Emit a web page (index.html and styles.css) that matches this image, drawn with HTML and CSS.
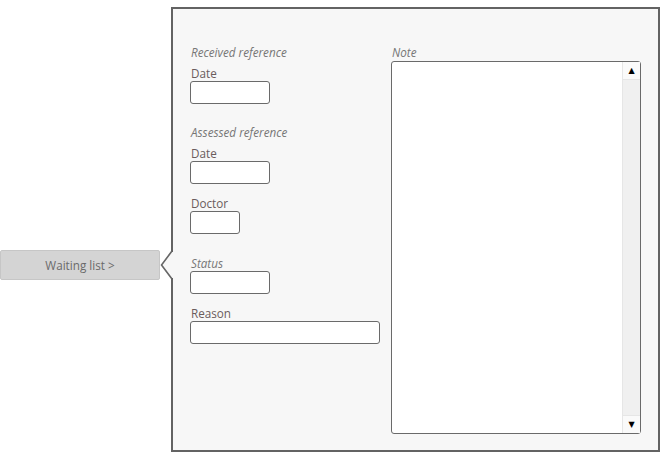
FILE: index.html
```html
<!DOCTYPE html>
<html>
<head>
<meta charset="utf-8">
<link rel="stylesheet" href="styles.css">
</head>
<body>
<div class="page">
  <div class="side">
    <button class="wl-btn">Waiting list &gt;</button>
  </div>
  <div class="panel">
    <svg class="notch" width="14" height="26" viewBox="0 0 14 26">
      <polygon points="10,0 14,0 14,26 10,26 1.5,13" fill="#f7f7f7"/>
      <polyline points="12,-1 1.5,13 12,27" fill="none" stroke="#666" stroke-width="1.6"/>
    </svg>
    <div class="grid">
      <div class="left">
        <div class="group">
          <div class="title">Received reference</div>
          <div class="label">Date</div>
          <div class="input w80"></div>
        </div>
        <div class="group g2">
          <div class="title">Assessed reference</div>
          <div class="label">Date</div>
          <div class="input w80"></div>
        </div>
        <div class="field">
          <div class="label">Doctor</div>
          <div class="input w50"></div>
        </div>
        <div class="field f-status">
          <div class="title">Status</div>
          <div class="input w80"></div>
        </div>
        <div class="field">
          <div class="label">Reason</div>
          <div class="input wfull"></div>
        </div>
      </div>
      <div class="right">
        <div class="title">Note</div>
        <div class="note">
          <div class="note-body"></div>
          <div class="scroll">
            <div class="arrow up">&#9650;</div>
            <div class="track"></div>
            <div class="arrow down">&#9660;</div>
          </div>
        </div>
      </div>
    </div>
  </div>
</div>
</body>
</html>
```
FILE: styles.css
```css
html, body {
  margin: 0;
  padding: 0;
  background: #ffffff;
}
body {
  font-family: "Open Sans", "Noto Sans", sans-serif;
  font-size: 11.7px;
}
.page {
  display: flex;
  align-items: flex-start;
  padding-top: 7px;
}
.side {
  width: 160px;
  padding-top: 243px;
}
.wl-btn {
  display: block;
  width: 160px;
  height: 30px;
  margin: 0;
  padding: 0;
  background: #d4d4d4;
  border: 1px solid #c6c6c6;
  border-radius: 2px;
  color: #6a6a6a;
  font-family: "Open Sans", "Noto Sans", sans-serif;
  font-size: 11.7px;
}
.panel {
  position: relative;
  margin-left: 11px;
  width: 485px;
  height: 441px;
  background: #f7f7f7;
  border: 2px solid #636363;
  box-shadow: 0 1px 0 #d0d0d0;
}
.notch {
  position: absolute;
  left: -13px;
  top: 243px;
  overflow: visible;
}
.grid {
  display: grid;
  grid-template-columns: 190px 250px;
  column-gap: 11px;
  padding: 35px 0 0 17px;
}
.title {
  font-style: italic;
  color: #767676;
  line-height: 16px;
  height: 16px;
  padding-left: 1px;
}
.label {
  color: #6a5c5c;
  line-height: 16px;
  height: 16px;
  padding-left: 1px;
}
.group .label {
  margin-top: 5px;
}
.g2 {
  margin-top: 20px;
}
.field {
  margin-top: 11px;
}
.f-status {
  margin-top: 21px;
}
.input {
  height: 21px;
  background: #ffffff;
  border: 1px solid #6a6a6a;
  border-radius: 3px;
}
.w80 { width: 78px; }
.w50 { width: 48px; }
.wfull { width: 188px; }
.note {
  display: flex;
  height: 371px;
  background: #ffffff;
  border: 1px solid #6a6a6a;
  border-radius: 3px;
}
.right .title {
  margin-bottom: 1px;
}
.note-body {
  flex: 1;
}
.scroll {
  width: 17px;
  display: flex;
  flex-direction: column;
  background: #f0f0f0;
  border-left: 1px solid #e6e6e6;
  border-radius: 0 2px 2px 0;
}
.arrow {
  height: 17px;
  background: #fafafa;
  color: #000;
  font-size: 8px;
  line-height: 17px;
  text-align: center;
  font-family: "DejaVu Sans", sans-serif;
}
.arrow.up { border-bottom: 1px solid #e6e6e6; }
.arrow.down { border-top: 1px solid #e6e6e6; }
.track { flex: 1; }
```
